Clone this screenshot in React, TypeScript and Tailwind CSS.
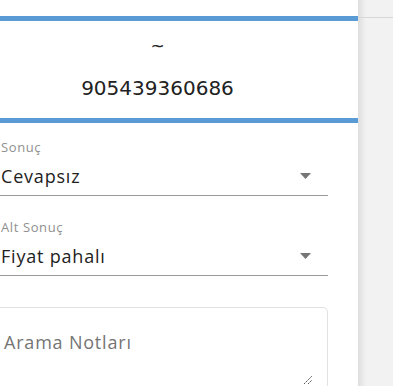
import React from 'react'

function Select({ label, value, className = '' }: { label: string; value: string; className?: string }) {
  return (
    <div className={`relative w-[328px] border-b border-[#9a9a9a] ${className}`}>
      <div className="text-[13px] leading-[16px] tracking-[0.6px] text-[#8f8f8f] pl-[1px] pt-px">{label}</div>
      <div className="flex items-center h-[40px] pt-[3px] text-[18px] tracking-[0.8px] text-[#222] pl-[1px]">{value}</div>
      <svg className="absolute right-[17px] top-[35px]" width="11" height="6" viewBox="0 0 11 6">
        <path d="M0 0 L11 0 L5.5 6 Z" fill="#767676" />
      </svg>
    </div>
  )
}

export default function App() {
  return (
    <div className="flex w-[393px] h-[386px] overflow-hidden bg-white" style={{ fontFamily: '"Open Sans", "Noto Sans", sans-serif' }}>
      {/* main panel */}
      <div className="w-[358px] shrink-0 bg-white">
        <div className="h-4" />
        <div className="h-[5px] bg-[#5b9bd5]" />
        <div className="w-[339px] -ml-3 text-center pt-[11px] pb-[16px] text-[#222]" style={{ fontFamily: '"DejaVu Sans", sans-serif' }}>
          <div className="h-[28px] leading-[28px] text-[17px]">~</div>
          <div className="h-[28px] leading-[28px] text-[20px] mt-[14px]">905439360686</div>
        </div>
        <div className="h-[5px] bg-[#5b9bd5]" />

        <div className="pt-[15px]">
          <Select label="Sonuç" value="Cevapsız" />
          <Select label="Alt Sonuç" value="Fiyat pahalı" className="mt-[22px]" />

          <div className="relative mt-[31px] -ml-2 w-[336px] h-[100px] rounded-[5px] border border-[#e2e2e2]">
            <div className="pl-[11px] pt-[21px] text-[18px] tracking-[0.8px] text-[#757575]">Arama Notları</div>
            <svg className="absolute right-[14px] top-[67px]" width="10" height="10" viewBox="0 0 10 10">
              <path d="M1 9 L9 1 M5 9 L9 5" stroke="#555" strokeWidth="1" strokeDasharray="2 1" />
            </svg>
          </div>
        </div>
      </div>

      {/* side panel */}
      <div className="flex-1 bg-[#f2f2f2] bg-gradient-to-r from-[#dedede] to-[#f2f2f2] to-[8px]">
        <div className="h-[17px]" />
        <div className="h-px bg-[#d8d8d8]" />
      </div>
    </div>
  )
}
